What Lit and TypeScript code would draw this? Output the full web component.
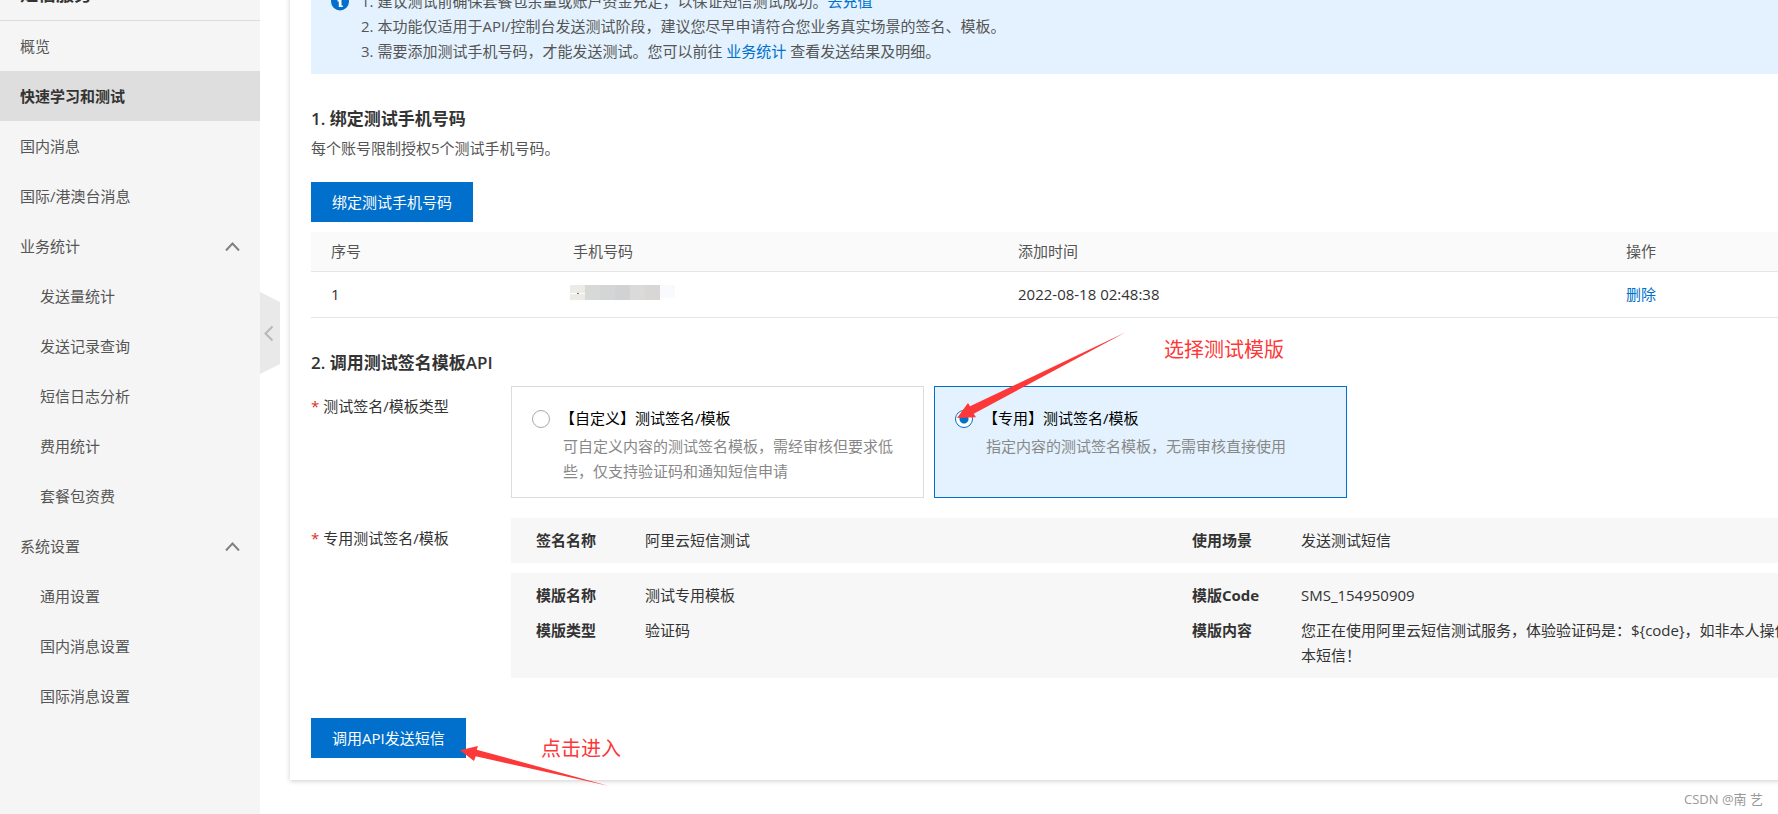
import { LitElement, html, css, nothing } from "lit";
import { customElement, property, state } from "lit/decorators.js";

interface NavEntry {
  label: string;
  active?: boolean;
  children?: string[];
}

const NAV: NavEntry[] = [
  { label: "概览" },
  { label: "快速学习和测试", active: true },
  { label: "国内消息" },
  { label: "国际/港澳台消息" },
  {
    label: "业务统计",
    children: ["发送量统计", "发送记录查询", "短信日志分析", "费用统计", "套餐包资费"],
  },
  { label: "系统设置", children: ["通用设置", "国内消息设置", "国际消息设置"] },
];

const MASK_COLORS = ["#ecebe6", "#d7d9d8", "#d5d5d5", "#d1d2d4", "#dadadb", "#d9d7d5", "#f8fafd"];

@customElement("side-nav")
export class SideNav extends LitElement {
  @state() private closed: string[] = [];

  static styles = css`
    :host {
      display: block;
      background: #f5f5f5;
      color: #555;
    }
    .title {
      box-sizing: border-box;
      height: 50px;
      margin: -29px 0 0;
      padding: 0 20px;
      border-bottom: 1px solid #dcdcdc;
      font-size: 18px;
      line-height: 46px;
      font-weight: 700;
      color: #333;
    }
    .item {
      display: flex;
      align-items: center;
      justify-content: space-between;
      box-sizing: border-box;
      width: 100%;
      height: 50px;
      padding: 0 20px;
      border: 0;
      background: none;
      font: inherit;
      color: inherit;
      text-align: left;
      text-decoration: none;
      cursor: pointer;
    }
    .active {
      background: #dedede;
      color: #333;
      font-weight: 700;
    }
    .sub {
      padding-left: 40px;
    }
    .chevron {
      width: 15px;
      height: 10px;
      fill: none;
      stroke: #808080;
      stroke-width: 2;
    }
    .chevron.closed {
      transform: rotate(180deg);
    }
  `;

  private toggle(label: string) {
    this.closed = this.closed.includes(label)
      ? this.closed.filter((l) => l !== label)
      : [...this.closed, label];
  }

  render() {
    return html`
      <h1 class="title">短信服务</h1>
      <nav>
        ${NAV.map((n) => {
          if (!n.children) {
            return html`<a class="item ${n.active ? "active" : ""}" href="#">${n.label}</a>`;
          }
          const closed = this.closed.includes(n.label);
          return html`
            <button class="item" aria-expanded=${closed ? "false" : "true"} @click=${() => this.toggle(n.label)}>
              ${n.label}
              <svg class="chevron ${closed ? "closed" : ""}" viewBox="0 0 15 10"><path d="M1 9.500 7.500 2.500 14 9.500" /></svg>
            </button>
            ${closed ? nothing : n.children.map((c) => html`<a class="item sub" href="#">${c}</a>`)}
          `;
        })}
      </nav>
    `;
  }
}

@customElement("type-option")
export class TypeOption extends LitElement {
  @property() heading = "";
  @property() text = "";
  @property({ type: Boolean, reflect: true }) checked = false;

  static styles = css`
    :host {
      display: block;
      box-sizing: border-box;
      width: 413px;
      padding: 19px 20px 13px;
      border: 1px solid #dcdcdc;
      background: #fff;
    }
    :host([checked]) {
      border-color: #0070cc;
      background: #e3f2fe;
    }
    .head {
      display: flex;
      align-items: center;
      gap: 10px;
      line-height: 25px;
      color: #000;
    }
    .radio {
      appearance: none;
      box-sizing: border-box;
      flex: none;
      width: 18px;
      height: 18px;
      margin: 0;
      border: 1px solid #aaa;
      border-radius: 50%;
      background: #fff;
    }
    .radio:checked {
      border-color: #0070cc;
      background: radial-gradient(circle, #0070cc 4px, #fff 5px);
    }
    .text {
      margin: 3px 0 0;
      padding-left: 31px;
      line-height: 25px;
      color: #888;
    }
  `;

  render() {
    return html`
      <label class="head">
        <input
          class="radio"
          type="radio"
          .checked=${this.checked}
          @change=${() => this.dispatchEvent(new CustomEvent("pick"))}
        />
        <span>${this.heading}</span>
      </label>
      <p class="text">${this.text}</p>
    `;
  }
}

@customElement("app-root")
export class AppRoot extends LitElement {
  @state() private type = "dedicated";

  static styles = css`
    :host {
      display: flex;
      position: relative;
      height: 100vh;
      overflow: hidden;
      background: #fff;
      color: #333;
      font-family: "Open Sans", "Noto Sans CJK SC", sans-serif;
      font-size: 15px;
      line-height: 25px;
    }
    side-nav {
      flex: none;
      width: 260px;
    }
    a {
      color: #0070cc;
      text-decoration: none;
    }
    .collapse {
      align-self: flex-start;
      flex: none;
      width: 20px;
      height: 82px;
      margin: 292px 10px 0 0;
      padding: 0;
      border: 0;
      background: none;
      cursor: pointer;
    }
    .collapse svg {
      display: block;
    }
    .card {
      box-sizing: border-box;
      align-self: flex-start;
      flex: 1 0 auto;
      width: 1604px;
      margin-top: -40px;
      padding: 19px 21px 22px;
      box-shadow: 0 1px 5px rgba(0, 0, 0, 0.2);
    }
    .notice {
      display: flex;
      gap: 12px;
      padding: 10px 20px;
      background: #e3f2fe;
      color: #555;
    }
    .notice svg {
      flex: none;
      margin-top: 3px;
    }
    .notice p {
      margin: 0;
    }
    h2 {
      margin: 32px 0 0;
      font-size: 17px;
      line-height: 26px;
      font-weight: 700;
    }
    .light {
      font-weight: 600;
    }
    .hint {
      margin: 4px 0 21px;
      color: #555;
    }
    .primary {
      display: block;
      height: 40px;
      padding: 0 21px;
      border: 0;
      background: #0070cc;
      color: #fff;
      font: inherit;
      cursor: pointer;
    }
    table {
      width: 100%;
      margin-top: 10px;
      border-collapse: separate;
      border-spacing: 0;
      table-layout: fixed;
    }
    th,
    td {
      box-sizing: border-box;
      padding: 0 20px;
      border-bottom: 1px solid #e5e5e5;
      text-align: left;
    }
    th {
      height: 40px;
      background: #fafafa;
      color: #555;
      font-weight: 400;
    }
    td {
      height: 46px;
    }
    .c1 {
      width: 242px;
    }
    .c2 {
      width: 445px;
    }
    .c3 {
      width: 608px;
    }
    .mask {
      display: block;
      margin: 0 0 5px -3px;
    }
    .row {
      display: flex;
      margin-top: 10px;
    }
    .row + .row {
      margin-top: 20px;
    }
    .name {
      flex: none;
      width: 200px;
      padding-top: 8px;
    }
    .star {
      margin-right: 4px;
      color: #d93026;
    }
    .options {
      display: flex;
      gap: 10px;
    }
    .panels {
      flex: 1;
      display: grid;
      gap: 10px;
    }
    .panel {
      display: grid;
      grid-template-columns: 65fr 66fr;
      gap: 10px 0;
      margin: 0;
      padding: 10px 15px 10px 25px;
      background: #f7f7f7;
    }
    .pair {
      display: grid;
      grid-template-columns: 109px 1fr;
    }
    dt {
      font-weight: 700;
    }
    dd {
      margin: 0;
    }
    .send {
      margin-top: 40px;
    }
    .marks {
      position: absolute;
      left: 0;
      top: 0;
      pointer-events: none;
      fill: #fc3838;
    }
    .note {
      position: absolute;
      color: #fc3838;
      font-size: 20px;
      line-height: 30px;
    }
    .note-type {
      left: 1164px;
      top: 335px;
    }
    .note-send {
      left: 541px;
      top: 734px;
    }
    .credit {
      position: absolute;
      right: 15px;
      bottom: 5px;
      color: #999;
      font-size: 13px;
      line-height: 20px;
    }
  `;

  private pair(k: string, v: string) {
    return html`<div class="pair"><dt>${k}</dt><dd>${v}</dd></div>`;
  }

  render() {
    return html`
      <side-nav></side-nav>
      <button class="collapse" aria-label="收起菜单">
        <svg width="20" height="82" viewBox="0 0 20 82">
          <path d="M0 0 20 10V72L0 82Z" fill="#e9e9e9" />
          <path d="M12.500 34.500 5.500 41.500 12.500 48.500" fill="none" stroke="#b8b8b8" stroke-width="2" />
        </svg>
      </button>

      <main class="card">
        <div class="notice">
          <svg width="18" height="19" viewBox="0 0 18 19">
            <circle cx="9" cy="9.500" r="9" fill="#0070cc" />
            <path d="M7.500 4h3v2.500h-3zM6.500 8h4v5.500h1.300v1.500H7.800V9.500H6.500z" fill="#fff" />
          </svg>
          <div>
            <p>1. 建议测试前确保套餐包余量或账户资金充足，以保证短信测试成功。<a href="#">去充值</a></p>
            <p>2. 本功能仅适用于API/控制台发送测试阶段，建议您尽早申请符合您业务真实场景的签名、模板。</p>
            <p>3. 需要添加测试手机号码，才能发送测试。您可以前往 <a href="#">业务统计</a> 查看发送结果及明细。</p>
          </div>
        </div>

        <h2><span class="light">1. </span>绑定测试手机号码</h2>
        <p class="hint">每个账号限制授权5个测试手机号码。</p>
        <button class="primary">绑定测试手机号码</button>
        <table>
          <thead>
            <tr>
              <th class="c1">序号</th>
              <th class="c2">手机号码</th>
              <th class="c3">添加时间</th>
              <th>操作</th>
            </tr>
          </thead>
          <tbody>
            <tr>
              <td>1</td>
              <td>
                <svg class="mask" width="105" height="15" viewBox="0 0 105 15">
                  ${MASK_COLORS.map(
                    (c, i) => html`<svg x=${i * 15} width="15" height="15"><rect width="15" height=${i === 6 ? 13 : 15} fill=${c} /></svg>`
                  )}
                  <path d="M0 8h15v1H0z" fill="#fff" />
                  <path d="M7 8h2v1H7z" fill="#678" />
                </svg>
              </td>
              <td>2022-08-18 02:48:38</td>
              <td><a href="#">删除</a></td>
            </tr>
          </tbody>
        </table>

        <h2><span class="light">2. </span>调用测试签名模板<span class="light">API</span></h2>
        <div class="row">
          <div class="name"><span class="star">*</span>测试签名/模板类型</div>
          <div class="options">
            <type-option
              heading="【自定义】测试签名/模板"
              text="可自定义内容的测试签名模板，需经审核但要求低些，仅支持验证码和通知短信申请"
              ?checked=${this.type === "custom"}
              @pick=${() => (this.type = "custom")}
            ></type-option>
            <type-option
              heading="【专用】测试签名/模板"
              text="指定内容的测试签名模板，无需审核直接使用"
              ?checked=${this.type === "dedicated"}
              @pick=${() => (this.type = "dedicated")}
            ></type-option>
          </div>
        </div>
        <div class="row">
          <div class="name"><span class="star">*</span>专用测试签名/模板</div>
          <div class="panels">
            <dl class="panel">
              ${this.pair("签名名称", "阿里云短信测试")} ${this.pair("使用场景", "发送测试短信")}
            </dl>
            <dl class="panel">
              ${this.pair("模版名称", "测试专用模板")} ${this.pair("模版Code", "SMS_154950909")}
              ${this.pair("模版类型", "验证码")}
              ${this.pair("模版内容", "您正在使用阿里云短信测试服务，体验验证码是：${code}，如非本人操作，请忽略本短信！")}
            </dl>
          </div>
        </div>
        <button class="primary send">调用API发送短信</button>
      </main>

      <svg class="marks" width="1200" height="814" viewBox="0 0 1200 814">
        <path d="M957 418 968 403 970 406.300 1125.700 332.300 973.700 413.700 976 417.300Z" />
        <path d="M460 750.300 478 746 476.700 749.700 608 785.700 475.700 756.300 474 761Z" />
      </svg>
      <span class="note note-type">选择测试模版</span>
      <span class="note note-send">点击进入</span>
      <span class="credit">CSDN @南 艺</span>
    `;
  }
}
